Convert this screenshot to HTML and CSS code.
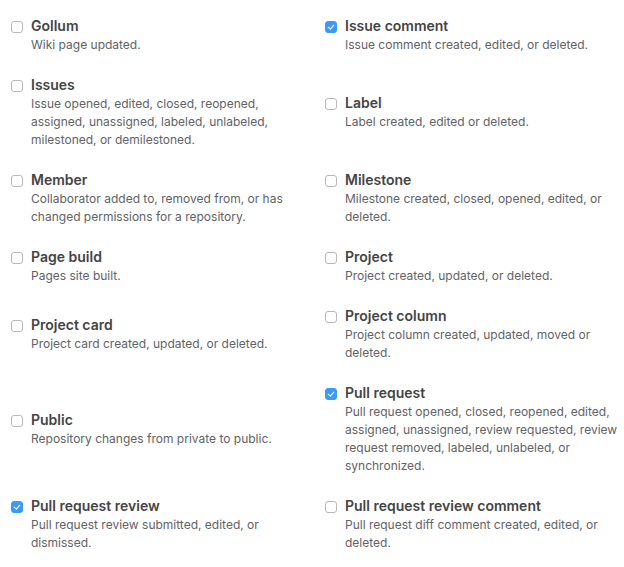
FILE: index.html
```html
<!DOCTYPE html>
<html>
<head>
<meta charset="utf-8">
<link rel="stylesheet" href="styles.css">
</head>
<body>
<div class="events">
  <label class="event">
    <span class="box"></span>
    <span class="text"><span class="title">Gollum</span><span class="note">Wiki page updated.</span></span>
  </label>
  <label class="event">
    <span class="box checked"></span>
    <span class="text"><span class="title">Issue comment</span><span class="note">Issue comment created, edited, or deleted.</span></span>
  </label>
  <label class="event">
    <span class="box"></span>
    <span class="text"><span class="title">Issues</span><span class="note">Issue opened, edited, closed, reopened, assigned, unassigned, labeled, unlabeled, milestoned, or demilestoned.</span></span>
  </label>
  <label class="event">
    <span class="box"></span>
    <span class="text"><span class="title">Label</span><span class="note">Label created, edited or deleted.</span></span>
  </label>
  <label class="event">
    <span class="box"></span>
    <span class="text"><span class="title">Member</span><span class="note">Collaborator added to, removed from, or has changed permissions for a repository.</span></span>
  </label>
  <label class="event">
    <span class="box"></span>
    <span class="text"><span class="title">Milestone</span><span class="note">Milestone created, closed, opened, edited, or deleted.</span></span>
  </label>
  <label class="event">
    <span class="box"></span>
    <span class="text"><span class="title">Page build</span><span class="note">Pages site built.</span></span>
  </label>
  <label class="event">
    <span class="box"></span>
    <span class="text"><span class="title">Project</span><span class="note">Project created, updated, or deleted.</span></span>
  </label>
  <label class="event">
    <span class="box"></span>
    <span class="text"><span class="title">Project card</span><span class="note">Project card created, updated, or deleted.</span></span>
  </label>
  <label class="event">
    <span class="box"></span>
    <span class="text"><span class="title">Project column</span><span class="note">Project column created, updated, moved or deleted.</span></span>
  </label>
  <label class="event">
    <span class="box"></span>
    <span class="text"><span class="title">Public</span><span class="note">Repository changes from private to public.</span></span>
  </label>
  <label class="event">
    <span class="box checked"></span>
    <span class="text"><span class="title">Pull request</span><span class="note">Pull request opened, closed, reopened, edited, assigned, unassigned, review requested, review request removed, labeled, unlabeled, or synchronized.</span></span>
  </label>
  <label class="event">
    <span class="box checked"></span>
    <span class="text"><span class="title">Pull request review</span><span class="note">Pull request review submitted, edited, or dismissed.</span></span>
  </label>
  <label class="event">
    <span class="box"></span>
    <span class="text"><span class="title">Pull request review comment</span><span class="note">Pull request diff comment created, edited, or deleted.</span></span>
  </label>
</div>
</body>
</html>
```
FILE: styles.css
```css
html, body {
  margin: 0;
  padding: 0;
  background: #fff;
}
body {
  font-family: Inter, "Liberation Sans", sans-serif;
  padding: 16px 0 0 11px;
}
.events {
  display: grid;
  grid-template-columns: 314px 1fr;
  row-gap: 21px;
  align-items: center;
}
.event {
  display: flex;
  align-items: flex-start;
}
.box {
  flex: none;
  width: 10px;
  height: 10px;
  margin: 5px 8px 0 0;
  border: 1px solid #b8b8b8;
  border-radius: 3px;
  background: #fff;
  position: relative;
}
.box.checked {
  background: #3b99fc;
  border-color: #3b99fc;
}
.box.checked::after {
  content: "";
  position: absolute;
  left: 3px;
  top: 1px;
  width: 2.5px;
  height: 5px;
  border: solid #fff;
  border-width: 0 1.5px 1.5px 0;
  transform: rotate(40deg);
}
.text {
  display: flex;
  flex-direction: column;
}
.event:nth-child(odd) .text {
  padding-right: 12px;
}
.title {
  font-size: 14px;
  line-height: 20px;
  font-weight: 600;
  color: #444;
}
.note {
  font-size: 12px;
  line-height: 18px;
  color: #5f6266;
}
```
